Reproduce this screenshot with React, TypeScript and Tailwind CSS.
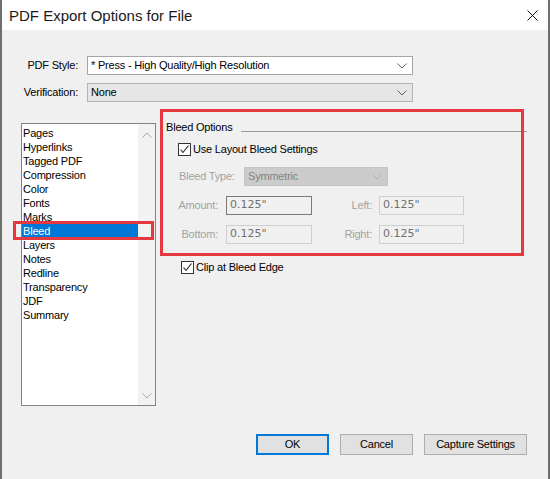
import React from "react";

const ITEMS = [
  "Pages",
  "Hyperlinks",
  "Tagged PDF",
  "Compression",
  "Color",
  "Fonts",
  "Marks",
  "Bleed",
  "Layers",
  "Notes",
  "Redline",
  "Transparency",
  "JDF",
  "Summary",
];

function Chevron({ color = "#606060", up = false }: { color?: string; up?: boolean }) {
  return (
    <svg width="10" height="6" viewBox="0 0 10 6" className="shrink-0">
      <polyline
        points={up ? "0.5,5.5 5,1 9.5,5.5" : "0.5,0.5 5,5 9.5,0.5"}
        fill="none"
        stroke={color}
        strokeWidth="1"
      />
    </svg>
  );
}

function Checkbox() {
  return (
    <span className="flex h-[13px] w-[13px] shrink-0 items-center justify-center border border-[#333] bg-white">
      <svg width="11" height="11" viewBox="0 0 11 11">
        <polyline points="1.5,5.5 4,8.5 9.5,1.5" fill="none" stroke="#222" strokeWidth="1.1" />
      </svg>
    </span>
  );
}

function ValueBox({ width, focused }: { width: string; focused?: boolean }) {
  return (
    <div
      className={`flex h-[19px] items-center pl-[3px] font-['DejaVu_Sans',sans-serif] text-[11px] tracking-normal text-[#707070] ${width} ${
        focused ? "border border-[#7a7a7a]" : "border border-[#cfcfcf]"
      }`}
    >
      0.125"
    </div>
  );
}

export default function App() {
  return (
    <div className="relative h-[479px] w-[550px] border-x-2 border-[#6f6f6f] bg-[#f0f0f0] font-['Liberation_Sans',Arial,sans-serif] text-[11px] tracking-[-0.2px] text-black">
      {/* title bar */}
      <div className="flex h-[30px] items-center justify-between bg-white pl-[7px] pr-[10px]">
        <span className="text-[15px] leading-none tracking-normal text-[#1a1a1a]">PDF Export Options for File</span>
        <svg width="11" height="11" viewBox="0 0 11 11">
          <path d="M0.5 0.5 L10.5 10.5 M10.5 0.5 L0.5 10.5" stroke="#111" strokeWidth="1" />
        </svg>
      </div>

      {/* style + verification */}
      <div className="mt-[26px] flex flex-col gap-[8px]">
        <div className="flex items-center">
          <span className="w-[76px] text-right">PDF Style:</span>
          <div className="ml-[9px] flex h-[19px] w-[326px] items-center justify-between border border-[#a5a5a5] bg-white pl-[3px] pr-[5px]">
            <span>* Press - High Quality/High Resolution</span>
            <Chevron />
          </div>
        </div>
        <div className="flex items-center">
          <span className="w-[76px] text-right">Verification:</span>
          <div className="ml-[9px] flex h-[19px] w-[326px] items-center justify-between border border-[#b4b4b4] bg-[#e6e6e6] pl-[3px] pr-[5px]">
            <span>None</span>
            <Chevron />
          </div>
        </div>
      </div>

      {/* main */}
      <div className="mt-[18px] flex items-start pl-[19px]">
        <div className="mt-[3px] flex h-[283px] w-[135px] border border-[#828282] bg-white">
          <ul className="flex-1 pt-[2px] leading-[14px]">
            {ITEMS.map((item) => (
              <li
                key={item}
                className={`h-[14px] pl-[1px] ${item === "Bleed" ? "bg-[#0078d7] text-white" : ""}`}
              >
                {item}
              </li>
            ))}
          </ul>
          <div className="flex w-[17px] flex-col items-center justify-between bg-[#f2f2f2] pb-[6px] pt-[8px]">
            <Chevron color="#a6a6a6" up />
            <Chevron color="#a6a6a6" />
          </div>
        </div>

        <div className="ml-[10px] flex flex-col">
          <div className="flex h-[14px] w-[361px] items-end">
            <span className="leading-[14px]">Bleed Options</span>
            <div className="mb-[2px] ml-[8px] h-px flex-1 bg-[#9a9a9a]" />
          </div>

          <div className="ml-[12px] mt-[9px] flex h-[13px] items-center gap-[2px]">
            <Checkbox />
            <span>Use Layout Bleed Settings</span>
          </div>

          <div className="mt-[11px] flex items-center">
            <span className="ml-[13px] w-[65px] text-[#a2a2a2]">Bleed Type:</span>
            <div className="flex h-[19px] w-[144px] items-center justify-between border border-[#c4c4c4] bg-[#cccccc] pl-[3px] pr-[5px] text-[#838383]">
              <span>Symmetric</span>
              <Chevron color="#b0b0b0" />
            </div>
          </div>

          <div className="mt-[10px] flex items-center">
            <span className="w-[52px] text-right text-[#a2a2a2]">Amount:</span>
            <div className="ml-[8px]">
              <ValueBox width="w-[86px]" focused />
            </div>
            <span className="w-[60px] text-right text-[#a2a2a2]">Left:</span>
            <div className="ml-[7px]">
              <ValueBox width="w-[85px]" />
            </div>
          </div>

          <div className="mt-[10px] flex items-center">
            <span className="w-[52px] text-right text-[#a2a2a2]">Bottom:</span>
            <div className="ml-[8px]">
              <ValueBox width="w-[86px]" />
            </div>
            <span className="w-[60px] text-right text-[#a2a2a2]">Right:</span>
            <div className="ml-[7px]">
              <ValueBox width="w-[85px]" />
            </div>
          </div>

          <div className="ml-[15px] mt-[17px] flex h-[13px] items-center gap-[2px]">
            <Checkbox />
            <span>Clip at Bleed Edge</span>
          </div>
        </div>
      </div>

      {/* buttons */}
      <div className="mt-[28px] flex justify-end gap-[11px] pr-[21px]">
        <button className="h-[21px] w-[73px] border-2 border-[#0078d7] bg-[#e1e1e1]">OK</button>
        <button className="h-[21px] w-[73px] border border-[#adadad] bg-[#e1e1e1]">Cancel</button>
        <button className="h-[21px] w-[103px] border border-[#adadad] bg-[#e1e1e1]">Capture Settings</button>
      </div>

      {/* annotation boxes */}
      <div className="pointer-events-none absolute left-[158px] top-[109px] h-[147px] w-[364px] border-[3px] border-[#e6393f]" />
      <div className="pointer-events-none absolute left-[11px] top-[221px] h-[19px] w-[141px] border-[3px] border-[#e6393f]" />
    </div>
  );
}
